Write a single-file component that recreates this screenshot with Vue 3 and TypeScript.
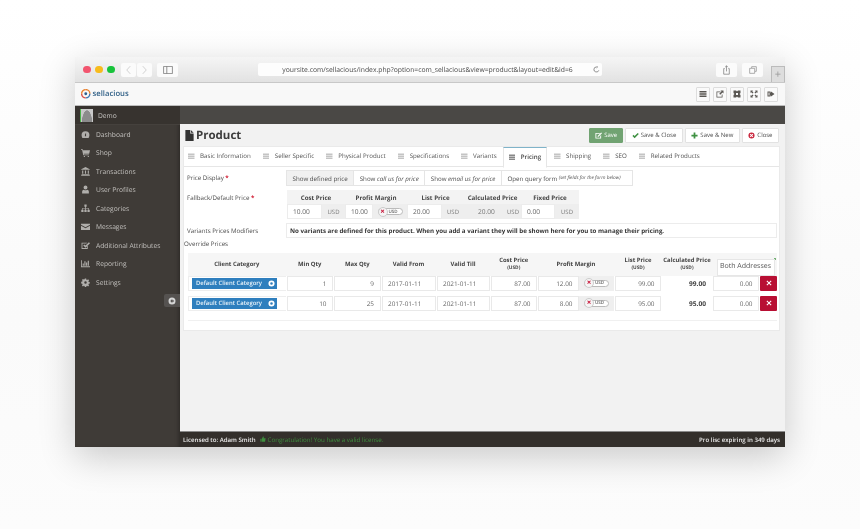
<template>
  <div class="page">
    <div class="window">
      <div class="titlebar">
        <div class="lights"><i class="red"></i><i class="yellow"></i><i class="green"></i></div>
        <div class="nav-pair">
          <button class="mac-btn nav"><svg viewBox="0 0 10 14"><path d="M7.5 1.5 2.5 7l5 5.5" /></svg></button>
          <button class="mac-btn nav"><svg viewBox="0 0 10 14"><path d="M2.5 1.5 7.5 7l-5 5.5" /></svg></button>
        </div>
        <button class="mac-btn side"><svg viewBox="0 0 12 10"><path d="M.5.5h11v9H.5zM4.5.5v9" /></svg></button>
        <div class="url">
          <span>yoursite.com/sellacious/index.php?option=com_sellacious&amp;view=product&amp;layout=edit&amp;id=6</span>
          <svg viewBox="0 0 10 10"><path d="M8.3 6.2A3.6 3.6 0 1 1 5 1.4M5 .2l1.6 1.2L5 2.7" /></svg>
        </div>
        <button class="mac-btn share"><svg viewBox="0 0 10 14"><path d="M2.5 5H1v8h8V5H7.500M5 9V1M3 3l2-2 2 2" /></svg></button>
        <button class="mac-btn copy"><svg viewBox="0 0 12 12"><path d="M4 3V1h7v7H9M1 3.500h7.500V11H1z" /></svg></button>
        <div class="new-tab">+</div>
      </div>

      <div class="app-header">
        <div class="logo">
          <svg viewBox="0 0 12 12">
            <path d="M6 .8A5.200 5.200 0 0 1 11.200 6" stroke="#e8812f" />
            <path d="M11.200 6A5.200 5.200 0 0 1 6 11.200" stroke="#3a78b5" />
            <path d="M6 11.200A5.200 5.200 0 0 1 .8 6" stroke="#d8504a" />
            <path d="M.8 6A5.200 5.200 0 0 1 6 .8" stroke="#e8812f" />
            <circle cx="6" cy="6" r="1.800" fill="#2e5f8e" />
          </svg>
          <span>sellacious</span>
        </div>
        <div class="tools">
          <button v-for="t in tools" :key="t" class="tool">
            <svg viewBox="0 0 16 16"><path :d="t" /></svg>
          </button>
        </div>
      </div>

      <div class="body">
        <aside class="sidebar">
          <div class="user">
            <span class="avatar"></span>
            <span>Demo</span>
          </div>
          <nav class="menu">
            <a v-for="m in menu" :key="m.label" class="menu-item">
              <svg viewBox="0 0 16 16"><path :d="m.icon" /></svg>
              <span>{{ m.label }}</span>
            </a>
          </nav>
          <div class="collapse">
            <svg viewBox="0 0 16 16"><path fill-rule="evenodd" d="M8 1a7 7 0 1 1 0 14A7 7 0 0 1 8 1zM8.500 4 4.500 8l4 4V9.500h3v-3h-3z" /></svg>
          </div>
        </aside>

        <main class="main">
          <div class="topbar"></div>
          <div class="content">
            <div class="title-row">
              <h1>
                <svg viewBox="0 0 12 16"><path d="M0 0h7v5h5v11H0zM8 0l4 4H8z" /></svg>
                Product
              </h1>
              <div class="actions">
                <button class="act primary">
                  <svg viewBox="0 0 16 16"><path d="M1 2h11l-2 2H3v9h9V9l2-2v8H1zM14 1l2 2-8 8H6V9z" /></svg>Save
                </button>
                <button class="act">
                  <svg class="ok" viewBox="0 0 16 16"><path d="M1 9l2.500-2.500L6 9l7-7 2.500 2.500L6 14z" /></svg>Save &amp; Close
                </button>
                <button class="act">
                  <svg class="ok" viewBox="0 0 16 16"><path d="M6 1h4v5h5v4h-5v5H6v-5H1V6h5z" /></svg>Save &amp; New
                </button>
                <button class="act">
                  <svg class="no" viewBox="0 0 16 16"><path fill-rule="evenodd" d="M8 1a7 7 0 1 1 0 14A7 7 0 0 1 8 1zM5.500 4 4 5.500 6.500 8 4 10.500 5.500 12 8 9.500 10.500 12 12 10.500 9.500 8 12 5.500 10.500 4 8 6.500z" /></svg>Close
                </button>
              </div>
            </div>

            <section class="card">
              <div class="tabs">
                <a v-for="tab in tabs" :key="tab" class="tab" :class="{ active: tab === 'Pricing' }">
                  <svg viewBox="0 0 10 10"><path d="M0 .8h10v2.400H0zM0 3.800h10v2.400H0zM0 6.800h10v2.400H0z" /></svg>
                  {{ tab }}
                </a>
              </div>

              <div class="form">
                <div class="field display">
                  <label>Price Display <b>*</b></label>
                  <div class="btn-group">
                    <span class="current">Show defined price</span>
                    <span>Show <em>call us for price</em></span>
                    <span>Show <em>email us for price</em></span>
                    <span>Open query form <small>(set fields for the form below)</small></span>
                  </div>
                </div>

                <div class="field fallback">
                  <label>Fallback/Default Price <b>*</b></label>
                  <div class="price-grid">
                    <div class="pg-head c-cost">Cost Price</div>
                    <div class="pg-head c-margin">Profit Margin</div>
                    <div class="pg-head c-list">List Price</div>
                    <div class="pg-head c-calc">Calculated Price</div>
                    <div class="pg-head c-fixed">Fixed Price</div>

                    <div class="pg-in">10.00</div><div class="pg-add">USD</div>
                    <div class="pg-in">10.00</div>
                    <div class="pg-add"><span class="toggle"><i>×</i>USD</span></div>
                    <div class="pg-in">20.00</div><div class="pg-add">USD</div>
                    <div class="pg-add calc-val">20.00</div><div class="pg-add">USD</div>
                    <div class="pg-in">0.00</div><div class="pg-add">USD</div>
                  </div>
                </div>

                <div class="field variants">
                  <label>Variants Prices Modifiers</label>
                  <div class="notice">No variants are defined for this product. When you add a variant they will be shown here for you to manage their pricing.</div>
                </div>

                <div class="override-label">Override Prices</div>

                <div class="override">
                  <div class="o-row o-head">
                    <div>Client Category</div>
                    <div>Min Qty</div>
                    <div>Max Qty</div>
                    <div>Valid From</div>
                    <div>Valid Till</div>
                    <div>Cost Price<small>(USD)</small></div>
                    <div>Profit Margin</div>
                    <div>List Price<small>(USD)</small></div>
                    <div>Calculated Price<small>(USD)</small></div>
                    <div class="o-faded">
                      <span class="o-dot"></span>
                    </div>
                    <div></div>
                  </div>
                  <div v-for="r in rows" :key="r.min" class="o-row">
                    <div class="cat-cell">
                      <span class="tag">Default Client Category
                        <svg viewBox="0 0 16 16"><path fill-rule="evenodd" d="M8 1a7 7 0 1 1 0 14A7 7 0 0 1 8 1zm0 4a3 3 0 1 0 0 6 3 3 0 0 0 0-6z" /></svg>
                      </span>
                    </div>
                    <div class="in right">{{ r.min }}</div>
                    <div class="in right">{{ r.max }}</div>
                    <div class="in">{{ r.from }}</div>
                    <div class="in">{{ r.till }}</div>
                    <div class="in right">{{ r.cost }}</div>
                    <div class="margin">
                      <div class="in right">{{ r.margin }}</div>
                      <div class="m-add"><span class="toggle"><i>×</i>USD</span></div>
                    </div>
                    <div class="in right">{{ r.list }}</div>
                    <div class="calc">{{ r.calc }}</div>
                    <div class="in right">0.00</div>
                    <button class="del"><svg viewBox="0 0 10 10"><path d="M2 .8 5 3.800 8 .8 9.200 2 6.200 5l3 3L8 9.200l-3-3-3 3L.8 8l3-3-3-3z" /></svg></button>
                  </div>
                  <div class="tip">Both Addresses</div>
                </div>
              </div>
            </section>
          </div>

          <footer class="footer">
            <span class="lic">Licensed to: Adam Smith</span>
            <span class="valid">
              <svg viewBox="0 0 16 16"><path d="M1 7h3v8H1zM5 7l3-6c2 0 2.500 1.500 2 3l-.5 2H15l-1.500 9H5z" /></svg>
              Congratulation! You have a valid license.
            </span>
            <span class="expire">Pro lisc expiring in 349 days</span>
          </footer>
        </main>
      </div>
    </div>
  </div>
</template>

<script setup lang="ts">
const tools: string[] = [
  'M1 2h14v3H1zM1 6.500h14v3H1zM1 11h14v3H1z',
  'M1 3h8v1.500H2.500v9h9V9H13v6H1zM9 1h6v6l-2-2-4.500 4.500L6.500 7.500 11 3z',
  'M1 1h5l2 2 2-2h5v5l-2 2 2 2v5h-5l-2-2-2 2H1v-5l2-2-2-2zM6 6v4h4V6z',
  'M1 1h5L4.500 2.500 7 5 5 7 2.500 4.500 1 6zM15 1v5l-1.500-1.500L11 7 9 5l2.500-2.500L10 1zM1 15v-5l1.500 1.500L5 9l2 2-2.500 2.500L6 15zM15 15h-5l1.500-1.500L9 11l2-2 2.500 2.500L15 10z',
  'M1 3h6v2H3v6h4v2H1zM8 5V3l7 5-7 5v-2H5V5z',
]

const menu: { label: string; icon: string }[] = [
  { label: 'Dashboard', icon: 'M8 2a7 7 0 0 1 7 7c0 2-.6 3.500-1.500 5h-11C1.600 12.500 1 11 1 9a7 7 0 0 1 7-7zM7 8v3h2V5z' },
  { label: 'Shop', icon: 'M0 2h3l.5 2H16l-1.500 6H5l.3 1.500H14V13H4L2 3.500H0zM5 14h2v2H5zM12 14h2v2h-2z' },
  { label: 'Transactions', icon: 'M8 0l7.500 4v1H.5V4zM2 6h2v6H2zM7 6h2v6H7zM12 6h2v6h-2zM1 13h14v1.500H1zM0 15h16v1H0z' },
  { label: 'User Profiles', icon: 'M8 1a3.500 3.500 0 1 1 0 7 3.500 3.500 0 0 1 0-7zM2 15v-3c0-2 1.500-3.500 3-3.500 1 .7 2 1 3 1s2-.3 3-1c1.500 0 3 1.500 3 3.500v3z' },
  { label: 'Categories', icon: 'M6 1h4v4H8.700v2H14v3h1.500v4h-4v-4H13V8.200H8.700V10H10v4H6v-4h1.300V8.200H3V10h1.500v4h-4v-4H2V7h5.300V5H6z' },
  { label: 'Messages', icon: 'M0 3h16v2L8 9.500 0 5zM0 6.500l8 4.500 8-4.500V14H0z' },
  { label: 'Additional Attributes', icon: 'M1 3h10l-1.500 1.500h-7v8h8V9L12 7.500V14H1zM14 2l2 2-8 8-4-4 2-2 2 2z' },
  { label: 'Reporting', icon: 'M0 2h1.500v11H16v1.500H0zM3 8h2v4H3zM6 4h2v8H6zM9 6h2v6H9zM12 3h2v9h-2z' },
  { label: 'Settings', icon: 'M6.800 1h2.400l.4 2 1.300.5 1.700-1.100 1.700 1.700-1.100 1.700.5 1.300 2 .4v2.400l-2 .4-.5 1.300 1.100 1.700-1.700 1.700-1.700-1.100-1.300.5-.4 2H6.800l-.4-2-1.300-.5-1.700 1.100-1.700-1.700 1.100-1.700-.5-1.300-2-.4V6.800l2-.4.5-1.300-1.100-1.700 1.700-1.700 1.700 1.100 1.300-.5zM8 5.800a2.200 2.200 0 1 0 0 4.400 2.200 2.200 0 0 0 0-4.400z' },
]

const tabs: string[] = [
  'Basic Information', 'Seller Specific', 'Physical Product', 'Specifications',
  'Variants', 'Pricing', 'Shipping', 'SEO', 'Related Products',
]

const rows = [
  { min: 1, max: 9, from: '2017-01-11', till: '2021-01-11', cost: '87.00', margin: '12.00', list: '99.00', calc: '99.00' },
  { min: 10, max: 25, from: '2017-01-11', till: '2021-01-11', cost: '87.00', margin: '8.00', list: '95.00', calc: '95.00' },
]
</script>

<style>
html, body { margin: 0; background: #fdfdfd; }
</style>

<style scoped>
* { box-sizing: border-box; }

.page {
  width: 860px;
  height: 529px;
  padding: 57px 75px 0;
  overflow: hidden;
  font-family: "Open Sans", "Liberation Sans", sans-serif;
  font-size: 6.200px;
  color: #4d4d4d;
  text-rendering: geometricPrecision;
  background: linear-gradient(180deg, #fff 0, #fafafa 60%, #fcfcfc 100%);
}

.window {
  width: 710px;
  height: 389.500px;
  display: flex;
  flex-direction: column;
  filter: blur(.3px);
  box-shadow: 0 10px 34px rgba(0, 0, 0, .2);
}

.titlebar {
  height: 26px;
  flex-shrink: 0;
  display: flex;
  align-items: center;
  position: relative;
  background: linear-gradient(180deg, #f5f5f5, #e2e2e2);
  border-bottom: 1px solid #c8c8c8;
  padding: 0 0 0 8px;
}

.lights { display: flex; gap: 4.500px; margin-right: 6.500px; }
.lights i { width: 7.500px; height: 7.500px; border-radius: 50%; display: block; }
.red { background: #f2556f; }
.yellow { background: #f7bb1c; }
.green { background: #17c33b; }

.mac-btn {
  border: 0;
  padding: 0;
  background: #fbfbfb;
  border-radius: 2px;
  height: 14px;
  display: flex;
  align-items: center;
  justify-content: center;
}
.mac-btn svg { fill: none; stroke: #8c8c8c; stroke-width: 1; }

.nav-pair { display: flex; gap: 1px; }
.nav { width: 15px; }
.nav svg { width: 7px; height: 10px; stroke: #c0c0c0; }
.side { width: 21px; margin-left: 5px; }
.side svg { width: 10px; height: 8px; stroke: #777; }

.url {
  width: 344px;
  height: 13px;
  margin-left: 80px;
  background: #fdfdfd;
  border-radius: 2px;
  display: flex;
  align-items: center;
  justify-content: center;
  color: #4a4a4a;
  font-size: 6.800px;
  position: relative;
  padding-right: 5px;
}
.url svg {
  position: absolute;
  right: 2px;
  width: 7px;
  height: 7px;
  fill: none;
  stroke: #666;
}

.share { width: 21px; margin-left: 114px; }
.share svg { width: 7px; height: 10px; stroke: #777; }
.copy { width: 21px; margin-left: 5px; }
.copy svg { width: 8px; height: 8px; stroke: #888; }

.new-tab {
  position: absolute;
  right: 0;
  bottom: 0;
  width: 14px;
  height: 16px;
  background: #ddd;
  border: 1px solid #bbb;
  border-bottom: 0;
  color: #999;
  font-size: 11px;
  line-height: 16px;
  text-align: center;
}

.app-header {
  height: 23px;
  flex-shrink: 0;
  display: flex;
  align-items: center;
  justify-content: space-between;
  background: #f8f8f8;
  border-bottom: 1px solid #bdbdbd;
  padding: 0 7px 0 6px;
}

.logo { display: flex; align-items: center; gap: 2px; color: #2f5f86; font-size: 7.700px; font-weight: 600; }
.logo svg { width: 9.500px; height: 9.500px; fill: none; stroke-width: 1.800; }
.logo circle { stroke: none; }

.tools { display: flex; gap: 3px; }
.tool {
  width: 14px;
  height: 15px;
  padding: 0;
  background: #fafafa;
  border: 1px solid #ddd;
  border-radius: 1px;
  display: flex;
  align-items: center;
  justify-content: center;
}
.tool svg { width: 8px; height: 8px; fill: #5a5753; }

.body { flex: 1; display: flex; min-height: 0; }

.sidebar {
  width: 105px;
  flex-shrink: 0;
  background: #3f3b37;
  color: #c3c1be;
  position: relative;
  box-shadow: inset -3px 0 4px -2px rgba(0, 0, 0, .35);
}

.user {
  height: 19px;
  background: #37332f;
  display: flex;
  align-items: center;
  gap: 5px;
  padding-left: 5px;
  color: #c6c4c1;
  font-size: 6.700px;
  border-bottom: 1px solid #45413d;
}
.avatar {
  width: 13px;
  height: 13px;
  display: block;
  border-left: 1px solid #49b349;
  background:
    radial-gradient(circle at 50% 32%, #8c8c8c 0 2.500px, transparent 3px),
    radial-gradient(ellipse at 50% 110%, #8c8c8c 0 5px, transparent 5.500px),
    #c9c9c9;
}

.menu-item {
  height: 18.500px;
  display: flex;
  align-items: center;
  gap: 6px;
  padding-left: 6px;
  font-size: 6.700px;
}
.menu-item svg { width: 9px; height: 9px; fill: #b0aeab; flex-shrink: 0; }

.collapse {
  position: absolute;
  right: 0;
  top: 188px;
  width: 16px;
  height: 13px;
  background: #555250;
  border-radius: 2px 0 0 2px;
  display: flex;
  align-items: center;
  justify-content: center;
}
.collapse svg { width: 8px; height: 8px; fill: #d5d5d5; }

.main { flex: 1; display: flex; flex-direction: column; min-width: 0; }

.topbar { height: 18px; flex-shrink: 0; background: #4a4845; }

.content {
  flex: 1;
  min-height: 0;
  background: #f2f2f2;
  padding: 0 3px;
}

.title-row {
  height: 22px;
  display: flex;
  align-items: center;
  justify-content: space-between;
  padding: 0 3px 0 2px;
}
h1 {
  margin: 0;
  display: flex;
  align-items: center;
  gap: 2px;
  font-size: 11.500px;
  font-weight: 700;
  color: #3d3d3d;
}
h1 svg { width: 9px; height: 11px; fill: #333; }

.actions { display: flex; gap: 2px; }
.act {
  height: 15px;
  padding: 0 5.500px;
  display: flex;
  align-items: center;
  gap: 2px;
  background: #fff;
  border: 1px solid #e2e2e2;
  border-radius: 1px;
  font-family: inherit;
  font-size: 6px;
  text-rendering: geometricPrecision;
  color: #4d4d4d;
}
.act svg { width: 7px; height: 7px; }
.act.primary { background: #71a372; border-color: #71a372; color: #fff; padding: 0 5px; }
.act.primary svg { fill: #fff; }
.ok { fill: #3f9142; }
.no { fill: #c9253c; }

.card {
  height: 185px;
  width: 597px;
  background: #fff;
  border: 1px solid #eaeaea;
}

.tabs {
  height: 20px;
  display: flex;
  align-items: stretch;
  padding-left: 4px;
  border-bottom: 1px solid #e6e6e6;
}
.tab {
  display: flex;
  align-items: center;
  gap: 5.500px;
  margin-right: 12px;
  padding-bottom: 1.500px;
  color: #555;
  font-size: 6.200px;
  white-space: nowrap;
}
.tab svg { width: 6.500px; height: 6.500px; fill: #c4c4c4; }
.tab.active {
  background: #fff;
  border: 1px solid #e6e6e6;
  border-top: 1px solid #7fb3c9;
  border-bottom-color: #fff;
  height: 21px;
  padding: 0 5px 1.500px;
  margin-left: -6px;
  margin-right: 7px;
  color: #444;
  font-weight: 600;
}
.tab.active svg { fill: #888; }

.form { position: relative; padding: 3px 0 0; }

.field { display: flex; padding-left: 3px; }
.field b { color: #d0182f; }
.field label { width: 99px; flex-shrink: 0; }

.display { height: 20px; align-items: flex-start; }
.display label { line-height: 15px; }
.btn-group { display: flex; height: 16px; border: 1px solid #e5e5e5; width: 347px; }
.btn-group span {
  display: flex;
  align-items: center;
  gap: 1.500px;
  padding: 0 5.500px;
  border-right: 1px solid #e5e5e5;
  white-space: nowrap;
}
.btn-group span:last-child { border-right: 0; }
.btn-group em { font-style: italic; }
.btn-group small { font-size: 4.800px; font-style: italic; }
.current { background: #f1f1f1; }

.fallback { height: 33px; }
.fallback label { padding-top: 3px; }
.price-grid {
  display: grid;
  grid-template-columns: 35px 23px 28px 34px 35px 22px 41px 16px 34px 24px;
  grid-template-rows: 14px 15px;
  width: 292px;
  height: 29px;
  background: #f3f3f3;
  margin-left: 1px;
}
.pg-head {
  grid-row: 1;
  display: flex;
  align-items: center;
  justify-content: center;
  font-weight: 700;
  color: #444;
  white-space: nowrap;
}
.c-cost { grid-column: 1 / 3; }
.c-margin { grid-column: 3 / 5; }
.c-list { grid-column: 5 / 7; }
.c-calc { grid-column: 7 / 9; }
.c-fixed { grid-column: 9 / 11; }
.pg-in {
  background: #fff;
  border: 1px solid #ececec;
  display: flex;
  align-items: center;
  padding-left: 5px;
  color: #666;
  font-size: 6.600px;
}
.pg-add {
  display: flex;
  align-items: center;
  justify-content: center;
  color: #777;
  background: #eeeeee;
  font-size: 6px;
}
.calc-val { padding-left: 4px; font-size: 6.600px; }

.toggle {
  display: inline-flex;
  align-items: center;
  gap: 1px;
  width: 25px;
  height: 7px;
  border: 1px solid #bbb;
  border-radius: 4px;
  background: #fff;
  font-size: 4.500px;
  font-weight: 600;
  color: #666;
}
.toggle i {
  width: 10px;
  height: 10px;
  margin-left: -1px;
  border-radius: 50%;
  background: #f5f5f5;
  border: 1px solid #ccc;
  color: #c7173a;
  font-size: 8px;
  line-height: 8px;
  font-style: normal;
  font-weight: 700;
  text-align: center;
  flex-shrink: 0;
}

.variants { height: 15px; align-items: center; }
.notice {
  width: 491px;
  height: 15px;
  display: flex;
  align-items: center;
  padding-left: 3px;
  border: 1px solid #ececec;
  font-weight: 700;
  color: #333;
  white-space: nowrap;
}

.override-label { height: 15px; line-height: 12px; }

.override {
  position: relative;
  margin: 0 2px 0 4px;
  padding: 0 0 4px;
  border-bottom: 1px solid #f0f0f0;
}

.o-row {
  display: grid;
  grid-template-columns: 97.500px 46.500px 46.500px 54px 53px 46.500px 76px 46px 50px 46px 17px;
  column-gap: 1px;
  height: 20px;
  padding: 0 0 4.500px;
  align-items: stretch;
}
.o-head {
  height: 22.500px;
  padding: 0 0 1.500px;
  background: #f6f6f6;
  align-items: center;
  font-weight: 700;
  font-size: 5.900px;
  color: #444;
  text-align: center;
  line-height: 8px;
  white-space: nowrap;
}
.o-head small { display: block; font-size: 4.800px; }
.o-faded { position: relative; height: 100%; }
.o-dot {
  position: absolute;
  right: -17px;
  top: 5px;
  width: 2px;
  height: 2px;
  border-radius: 50%;
  background: #4a9a4a;
}

.in {
  background: #fff;
  border: 1px solid #e9e9e9;
  display: flex;
  align-items: center;
  padding: 0 5.500px;
  color: #666;
  font-size: 6.400px;
  min-width: 0;
}
.in.right { justify-content: flex-end; }

.cat-cell {
  display: flex;
  align-items: center;
  padding-left: 3px;
  border: 1px solid #eeeeee;
  border-right: 0;
}
.tag {
  width: 85px;
  height: 11px;
  display: flex;
  align-items: center;
  justify-content: space-between;
  padding: 0 2px 0 4px;
  background: #2f7fbe;
  color: #eaf3fa;
  font-size: 5.900px;
  font-weight: 600;
  white-space: nowrap;
}
.tag svg { width: 7px; height: 7px; fill: #fff; flex-shrink: 0; }

.margin { display: grid; grid-template-columns: 41px 1fr; }
.m-add { background: #efefef; display: flex; align-items: center; justify-content: center; }

.calc {
  display: flex;
  align-items: center;
  justify-content: flex-end;
  padding-right: 6px;
  font-weight: 700;
  font-size: 6.600px;
  color: #444;
}

.del {
  border: 0;
  padding: 0;
  background: #b80f33;
  border-radius: 1px;
  display: flex;
  align-items: center;
  justify-content: center;
}
.del svg { width: 6px; height: 6px; fill: #fff; }

.tip {
  position: absolute;
  right: 2.500px;
  top: 6px;
  width: 58px;
  height: 16.500px;
  background: #fff;
  border: 1px solid #e6e6e6;
  font-size: 7px;
  line-height: 14.500px;
  text-align: center;
  color: #555;
}

.footer {
  height: 16px;
  flex-shrink: 0;
  display: flex;
  align-items: center;
  padding: 0 5px 0 3px;
  background: #332f2b;
  color: #eee;
  font-size: 6.100px;
  border-top: 1px solid #8a8a8a;
}
.lic { font-weight: 600; }
.valid { display: flex; align-items: center; gap: 2px; margin-left: 4px; color: #3f8f3f; font-size: 6.200px; }
.valid svg { width: 6px; height: 6px; fill: #3f8f3f; }
.expire { margin-left: auto; font-weight: 600; }
</style>
